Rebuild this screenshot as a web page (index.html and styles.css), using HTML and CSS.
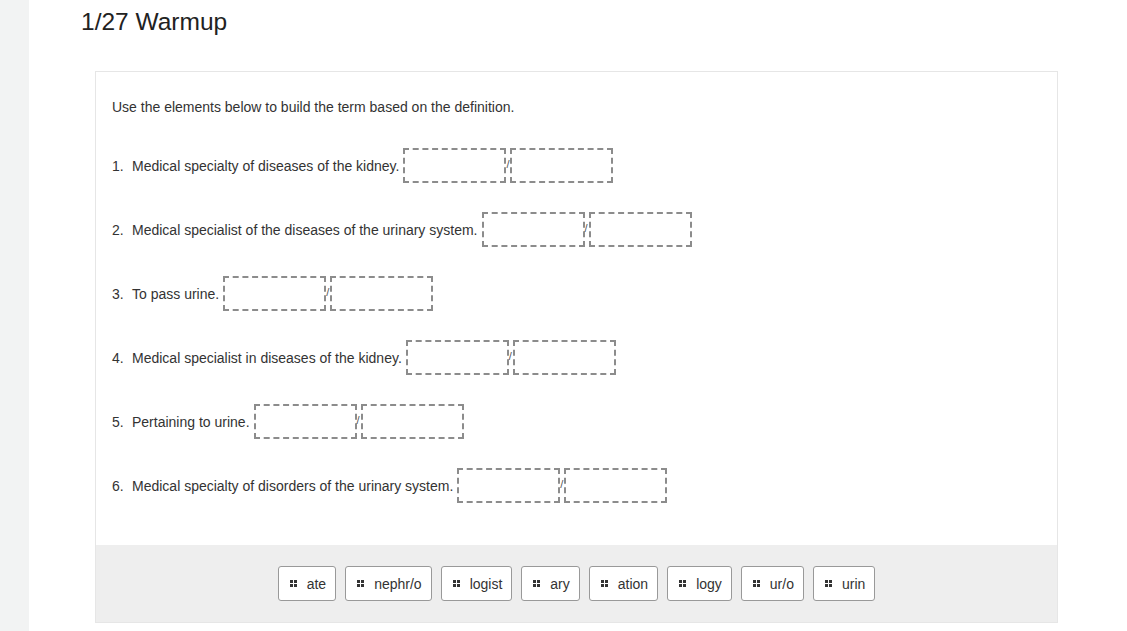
FILE: index.html
```html
<!DOCTYPE html>
<html lang="en">
<head>
    <meta charset="UTF-8">
    <meta name="viewport" content="width=device-width, initial-scale=1.0">
    <title>1/27 Warmup</title>
    <link rel="stylesheet" href="styles.css">
</head>
<body>

    <div class="layout">
        <div class="sidebar"></div>

        <div class="main">
            <h1>1/27 Warmup</h1>

            <div class="card">
                <div class="card-body">
                    <p class="prompt">Use the elements below to build the term based on the definition.</p>

                    <div class="question">
                        <span class="num">1.</span>
                        <span class="text">Medical specialty of diseases of the kidney.</span>
                        <span class="drop"></span><span class="slash">/</span><span class="drop"></span>
                    </div>
                    <div class="question">
                        <span class="num">2.</span>
                        <span class="text">Medical specialist of the diseases of the urinary system.</span>
                        <span class="drop"></span><span class="slash">/</span><span class="drop"></span>
                    </div>
                    <div class="question">
                        <span class="num">3.</span>
                        <span class="text">To pass urine.</span>
                        <span class="drop"></span><span class="slash">/</span><span class="drop"></span>
                    </div>
                    <div class="question">
                        <span class="num">4.</span>
                        <span class="text">Medical specialist in diseases of the kidney.</span>
                        <span class="drop"></span><span class="slash">/</span><span class="drop"></span>
                    </div>
                    <div class="question">
                        <span class="num">5.</span>
                        <span class="text">Pertaining to urine.</span>
                        <span class="drop"></span><span class="slash">/</span><span class="drop"></span>
                    </div>
                    <div class="question">
                        <span class="num">6.</span>
                        <span class="text">Medical specialty of disorders of the urinary system.</span>
                        <span class="drop"></span><span class="slash">/</span><span class="drop"></span>
                    </div>
                </div>

                <div class="bank">
                    <div class="chip"><span class="grip"></span>ate</div>
                    <div class="chip"><span class="grip"></span>nephr/o</div>
                    <div class="chip"><span class="grip"></span>logist</div>
                    <div class="chip"><span class="grip"></span>ary</div>
                    <div class="chip"><span class="grip"></span>ation</div>
                    <div class="chip"><span class="grip"></span>logy</div>
                    <div class="chip"><span class="grip"></span>ur/o</div>
                    <div class="chip"><span class="grip"></span>urin</div>
                </div>
            </div>
        </div>
    </div>

</body>
</html>
```

FILE: styles.css
```css
body {
    margin: 0;
    font-family: "Liberation Sans", Arial, sans-serif;
    color: #333;
    background-color: #fff;
}
.layout {
    display: flex;
    min-height: 631px;
}
.sidebar {
    width: 29px;
    flex-shrink: 0;
    background: #f2f3f3;
}
.main {
    padding-left: 52px;
    width: 977px;
}
h1 {
    margin: 8px 0 0 0;
    font-size: 24.5px;
    font-weight: normal;
    line-height: 28px;
    color: #222;
}
.card {
    margin: 35px 0 0 14px;
    border: 1px solid #e6e6e6;
    width: 961px;
}
.card-body {
    padding: 25px 16px 42px 16px;
}
.prompt {
    margin: 0 0 31px 0;
    font-size: 14px;
    line-height: 20px;
}
.question {
    display: flex;
    align-items: center;
    height: 35px;
    margin-bottom: 29px;
    font-size: 14px;
}
.question:last-child {
    margin-bottom: 0;
}
.num {
    width: 20px;
}
.text {
    margin-right: 4px;
}
.drop {
    width: 99px;
    height: 31px;
    border: 2px dashed #8c8c8c;
}
.slash {
    font-size: 11px;
    width: 5px;
    margin: 0 -1px 0 0;
    color: #555;
    position: relative;
    top: -2px;
}
.bank {
    background: #eee;
    height: 77px;
    display: flex;
    justify-content: center;
    align-items: center;
    gap: 9px;
}
.chip {
    display: flex;
    align-items: center;
    height: 33px;
    padding: 0 9px 0 11px;
    background: white;
    border: 1px solid #999;
    border-radius: 3px;
    font-size: 14px;
}
.grip {
    width: 7px;
    height: 7px;
    margin-right: 10px;
    background:
        linear-gradient(#333, #333) 0 0 / 3px 3px no-repeat,
        linear-gradient(#333, #333) 4px 0 / 3px 3px no-repeat,
        linear-gradient(#333, #333) 0 4px / 3px 3px no-repeat,
        linear-gradient(#333, #333) 4px 4px / 3px 3px no-repeat;
}
```
